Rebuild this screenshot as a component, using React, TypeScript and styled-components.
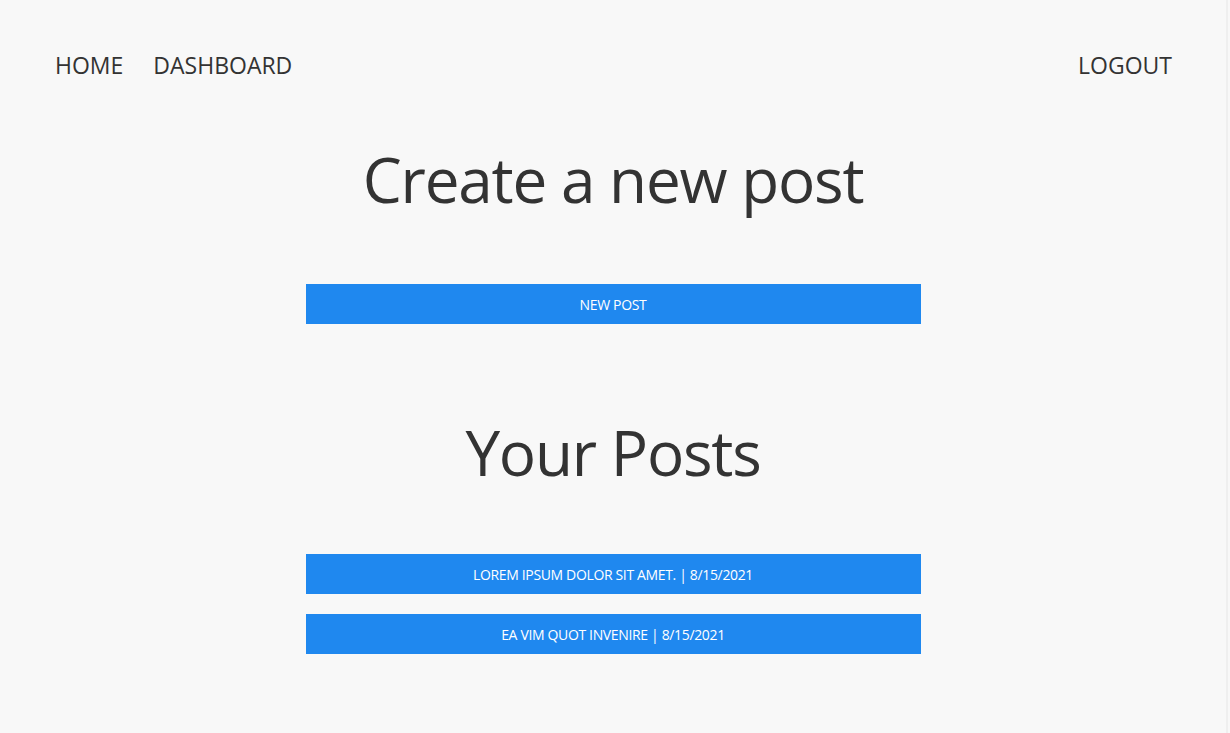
import React from "react";
import styled, { createGlobalStyle } from "styled-components";

const Global = createGlobalStyle`
  html, body {
    margin: 0;
    padding: 0;
    background: #f8f8f8;
  }
  body {
    font-family: "Open Sans", "Noto Sans", "Liberation Sans", sans-serif;
    color: #333333;
  }
`;

const Page = styled.div`
  width: 1228px;
  min-height: 733px;
  box-sizing: border-box;
  border-right: 2px solid #efefef;
  background: #f8f8f8;
`;

const Nav = styled.nav`
  display: flex;
  justify-content: space-between;
  align-items: center;
  padding: 47px 54px 0 55px;
  height: 36px;
`;

const NavGroup = styled.div`
  display: flex;
  gap: 30px;
`;

const NavLink = styled.a`
  font-size: 23px;
  color: #333333;
  text-decoration: none;
  text-transform: uppercase;
  letter-spacing: 0;
`;

const Main = styled.main`
  display: flex;
  flex-direction: column;
  align-items: center;
  padding-top: 3px;
`;

const Heading = styled.h1<{ $top: number }>`
  margin: ${(p) => p.$top}px 0 0 0;
  font-size: 62px;
  font-weight: 400;
  line-height: 80px;
  color: #333333;
  letter-spacing: -1.2px;
`;

const List = styled.div<{ $top: number }>`
  display: flex;
  flex-direction: column;
  gap: 20px;
  width: 615px;
  margin-top: ${(p) => p.$top}px;
`;

const BlueButton = styled.button`
  height: 40px;
  width: 100%;
  border: none;
  background: #1f88ef;
  color: #ffffff;
  font-family: inherit;
  font-size: 14px;
  text-transform: uppercase;
  letter-spacing: -0.35px;
  cursor: pointer;
`;

const posts = [
  { title: "Lorem ipsum dolor sit amet.", date: "8/15/2021" },
  { title: "Ea vim quot invenire", date: "8/15/2021" },
];

export default function App() {
  return (
    <>
      <Global />
      <Page>
        <Nav>
          <NavGroup>
            <NavLink href="#">Home</NavLink>
            <NavLink href="#">Dashboard</NavLink>
          </NavGroup>
          <NavLink href="#">Logout</NavLink>
        </Nav>
        <Main>
          <Heading $top={53}>Create a new post</Heading>
          <List $top={65}>
            <BlueButton>New Post</BlueButton>
          </List>
          <Heading $top={88}>Your Posts</Heading>
          <List $top={62}>
            {posts.map((p) => (
              <BlueButton key={p.title}>
                {p.title} | {p.date}
              </BlueButton>
            ))}
          </List>
        </Main>
      </Page>
    </>
  );
}
